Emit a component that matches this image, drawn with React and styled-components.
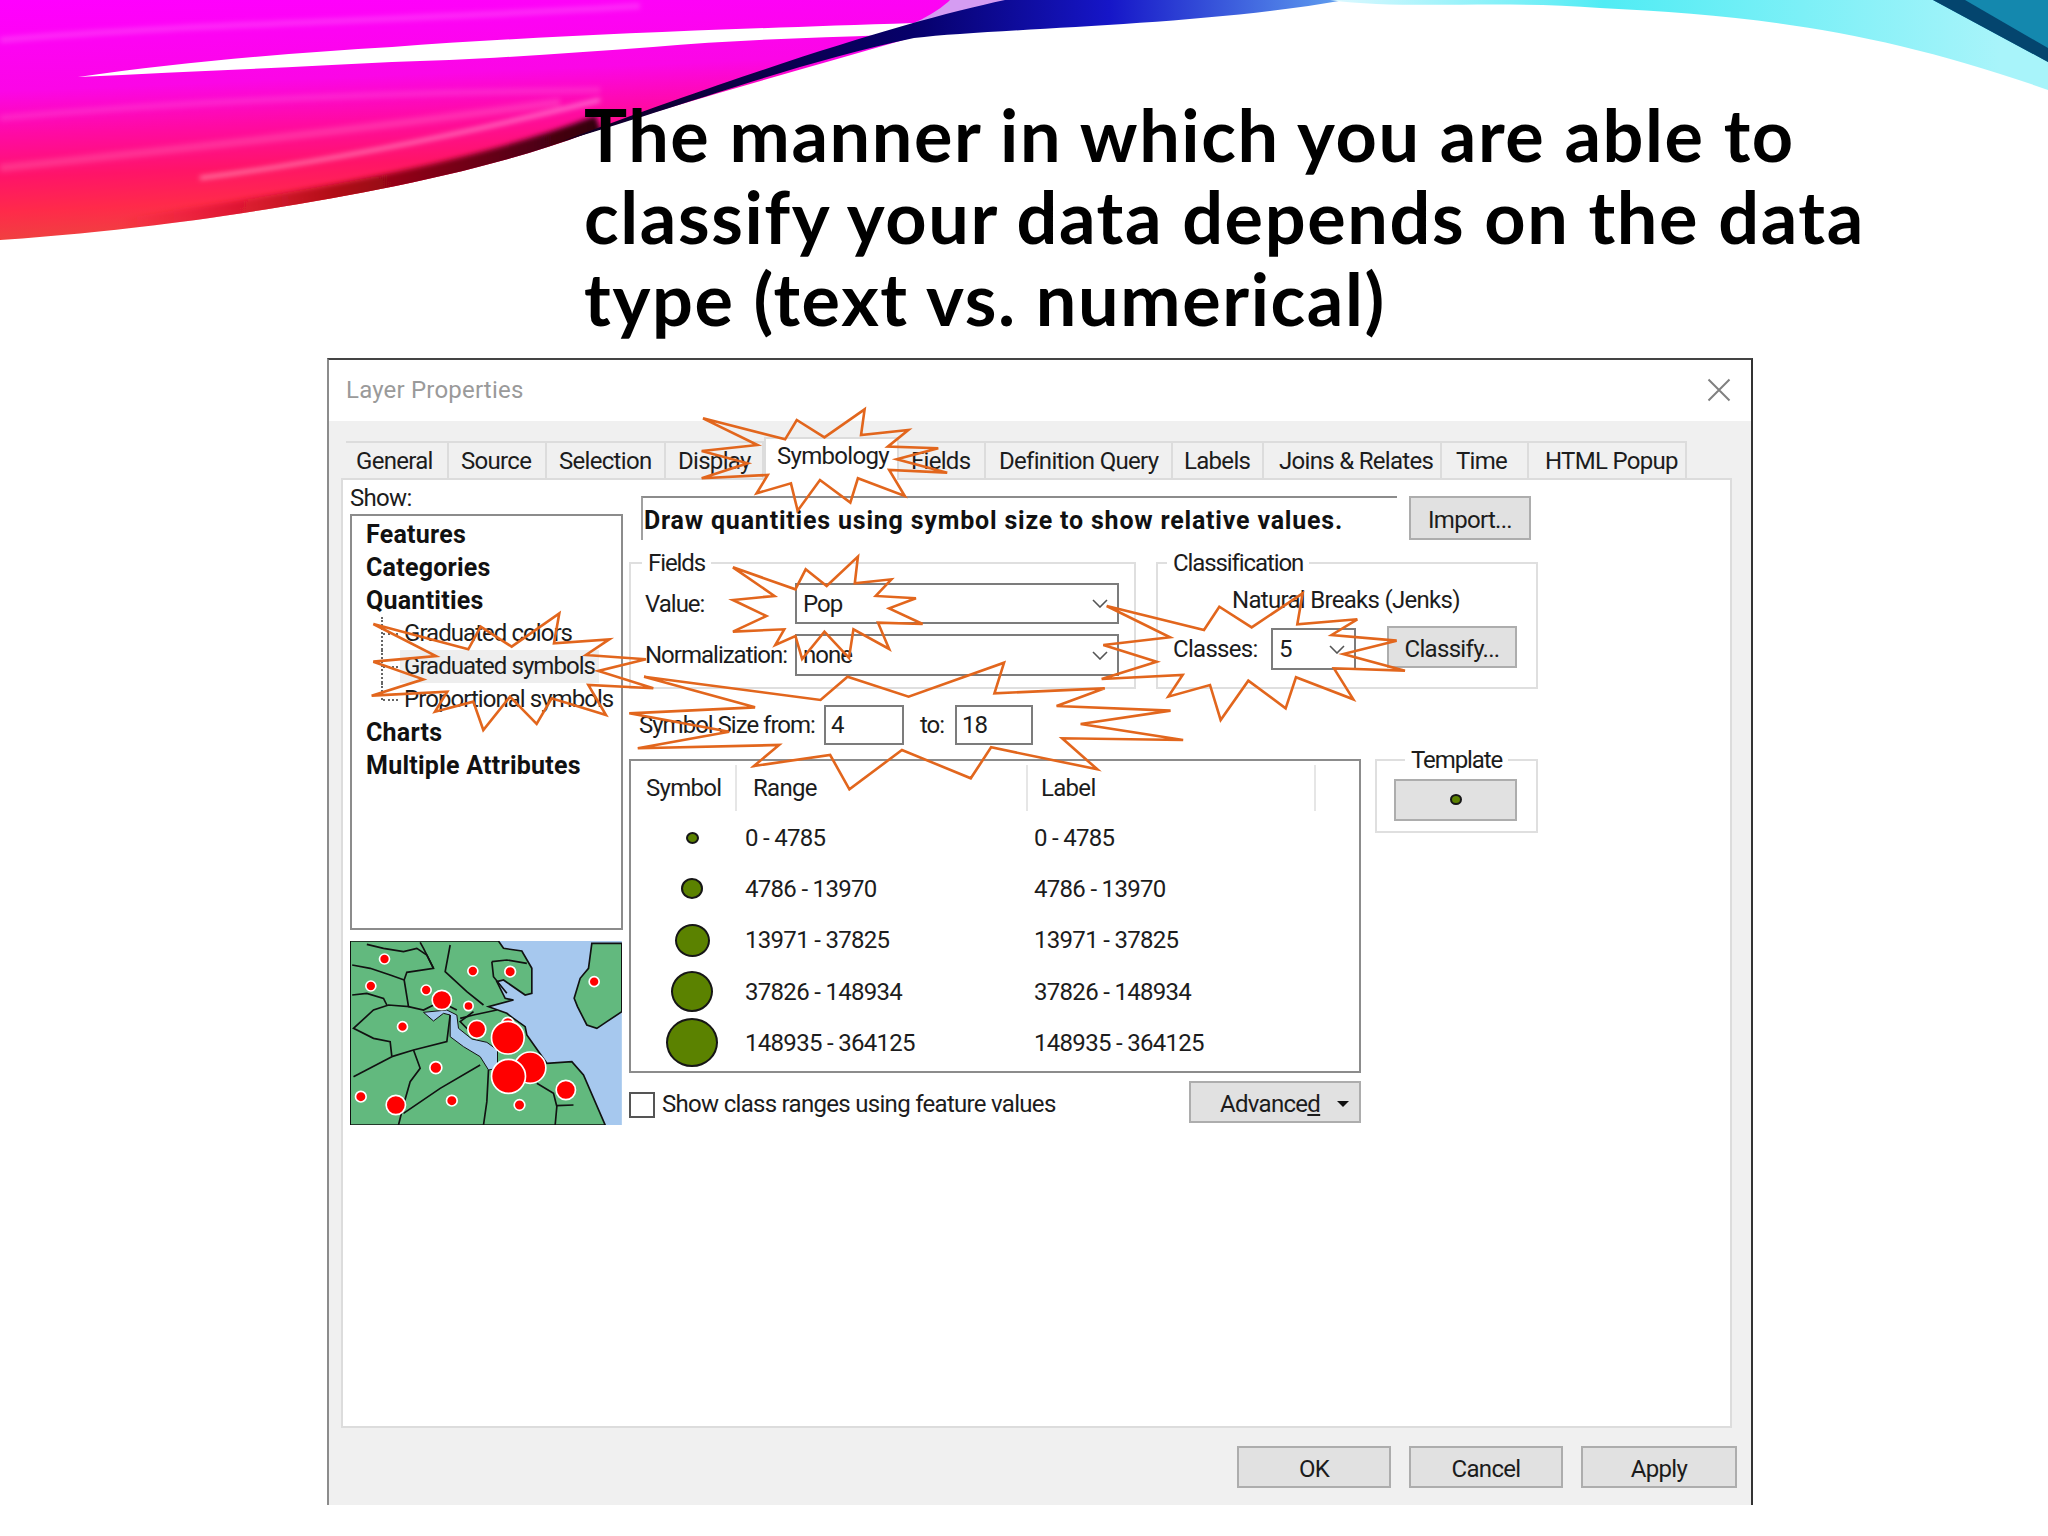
import React from "react";
import styled, { createGlobalStyle } from "styled-components";

const GlobalStyle = createGlobalStyle`
  html, body {
    margin: 0;
    background: #fff;
  }
`;

const Slide = styled.div`
  position: relative;
  width: 2048px;
  height: 1536px;
  overflow: hidden;
  background: #fff;
  font-family: Roboto, "Liberation Sans", sans-serif;
  font-size: 24px;
  letter-spacing: -0.7px;
  color: #1c1c1c;
`;
const Banner = styled.svg`
  position: absolute;
  left: 0;
  top: 0;
`;
const Callouts = styled.svg`
  position: absolute;
  left: 0;
  top: 0;
  z-index: 5;
  pointer-events: none;
`;
const Title = styled.h1`
  position: relative;
  margin: 0;
  padding: 93px 0 0 584px;
  height: 358px;
  box-sizing: border-box;
  font-family: Lato, "Open Sans", sans-serif;
  font-weight: 700;
  font-size: 72px;
  line-height: 82px;
  letter-spacing: 1.6px;
  color: #000;
`;

const Dialog = styled.div`
  position: relative;
  margin-left: 327px;
  width: 1426px;
  height: 1147px;
  box-sizing: border-box;
  background: #f0f0f0;
  border-top: 2px solid #444;
  border-left: 2px solid #8c8c8c;
  border-right: 2px solid #333;
  display: flex;
  flex-direction: column;
`;
const TitleBar = styled.div`
  height: 59px;
  flex: none;
  background: #fff;
  display: flex;
  align-items: center;
  justify-content: space-between;
  padding: 0 20px 2px 17px;
  letter-spacing: 0.2px;
  color: #9a9a9a;
`;
const TabBar = styled.div`
  margin: 20px 0 0 17px;
  height: 37px;
  flex: none;
  display: flex;
  align-items: flex-end;
`;
const Tab = styled.div`
  width: ${(p) => p.$w}px;
  height: ${(p) => (p.$active ? 43 : 37)}px;
  margin-bottom: ${(p) => (p.$active ? -2 : 0)}px;
  position: relative;
  z-index: ${(p) => (p.$active ? 1 : 0)};
  flex: none;
  box-sizing: border-box;
  background: ${(p) => (p.$active ? "#fff" : "#f0f0f0")};
  border: 2px solid #dcdcdc;
  border-left-width: ${(p) => (p.$active ? 2 : 0)}px;
  border-bottom-width: 0;
  display: flex;
  align-items: center;
  padding-left: ${(p) => p.$pad}px;
  padding-bottom: ${(p) => (p.$active ? 8 : 0)}px;
  white-space: nowrap;
`;
const Panel = styled.div`
  margin-left: 12px;
  width: 1391px;
  height: 950px;
  flex: none;
  box-sizing: border-box;
  background: #fff;
  border: 2px solid #dcdcdc;
  padding-left: 7px;
  display: flex;
  gap: 6px;
`;
const LeftColumn = styled.div`
  width: 273px;
  flex: none;
  display: flex;
  flex-direction: column;
`;
const ShowLabel = styled.div`
  height: 34px;
  line-height: 36px;
`;
const ListBox = styled.div`
  height: 416px;
  flex: none;
  box-sizing: border-box;
  border: 2px solid #8c8c8c;
  padding-top: 2px;
`;
const GroupRow = styled.div`
  height: 33px;
  line-height: 33px;
  padding-left: 14px;
  font-weight: 700;
  font-size: 25px;
  letter-spacing: 0.25px;
  color: #111;
`;
const TreeRow = styled.div`
  position: relative;
  height: 33px;
  line-height: 33px;
  padding-left: 48px;
  white-space: nowrap;
  letter-spacing: -0.95px;

  &::before {
    content: "";
    position: absolute;
    left: 29px;
    top: 0;
    height: ${(p) => (p.$last ? "50%" : "100%")};
    border-left: 2px dotted #666;
  }
  &::after {
    content: "";
    position: absolute;
    left: 31px;
    top: 16px;
    width: 15px;
    border-top: 2px dotted #666;
  }
`;
const TreeLabel = styled.span`
  display: inline-block;
  padding: 0 4px;
  background: ${(p) => (p.$selected ? "#eeeeee" : "transparent")};
`;
const MapFrame = styled.svg`
  margin-top: 11px;
  display: block;
  flex: none;
`;
const RightColumn = styled.div`
  width: 909px;
  flex: none;
  padding-top: 16px;
  display: flex;
  flex-direction: column;
`;
const TopRow = styled.div`
  display: flex;
  padding-left: 12px;
  gap: 12px;
`;
const Description = styled.div`
  width: 756px;
  height: 44px;
  box-sizing: border-box;
  border-top: 2px solid #8c8c8c;
  border-left: 2px solid #a0a0a0;
  padding-left: 1px;
  line-height: 46px;
  font-weight: 700;
  font-size: 25px;
  letter-spacing: 0.8px;
  white-space: nowrap;
  color: #111;
`;
const Button = styled.div`
  width: ${(p) => p.$w}px;
  height: ${(p) => p.$h || 43}px;
  flex: none;
  box-sizing: border-box;
  background: #e1e1e1;
  border: 2px solid #adadad;
  padding-top: 3px;
  display: flex;
  align-items: center;
  justify-content: center;
`;
const GroupsRow = styled.div`
  margin-top: 22px;
  display: flex;
  gap: 20px;
`;
const Group = styled.div`
  position: relative;
  width: ${(p) => p.$w}px;
  height: ${(p) => p.$h}px;
  flex: none;
  box-sizing: border-box;
  border: 2px solid #dfdfdf;
`;
const Legend = styled.span`
  position: absolute;
  left: ${(p) => p.$left}px;
  top: -15px;
  padding: 0 6px;
  background: #fff;
  letter-spacing: -1.1px;
`;
const FieldsGrid = styled.div`
  padding: 19px 0 0 14px;
  display: grid;
  grid-template-columns: 150px 324px;
  grid-template-rows: 41px 42px;
  row-gap: 10px;
  align-items: center;
  letter-spacing: -1px;
`;
const Combo = styled.div`
  width: ${(p) => p.$w || 324}px;
  height: ${(p) => p.$h || 41}px;
  flex: none;
  box-sizing: border-box;
  background: #fff;
  border: 2px solid #7c7c7c;
  display: flex;
  align-items: center;
  justify-content: space-between;
  padding: 0 9px 0 6px;
`;
const NaturalBreaks = styled.div`
  padding: 22px 0 0 74px;
  height: 28px;
  line-height: 28px;
`;
const ClassesRow = styled.div`
  margin-top: 14px;
  padding-left: 15px;
  display: flex;
  align-items: center;
`;
const ClassesLabel = styled.span`
  width: 98px;
`;
const ClassifyButton = styled(Button)`
  margin: -4px 0 0 31px;
`;
const SizeRow = styled.div`
  margin-top: 16px;
  padding-left: 10px;
  height: 40px;
  display: flex;
  align-items: center;
  letter-spacing: -1px;
`;
const SizeLabel = styled.span`
  width: ${(p) => p.$w}px;
  padding-left: ${(p) => p.$pad || 0}px;
  box-sizing: border-box;
`;
const NumberBox = styled.div`
  width: ${(p) => p.$w}px;
  height: 40px;
  flex: none;
  box-sizing: border-box;
  border: 2px solid #7c7c7c;
  padding-left: 5px;
  line-height: 36px;
`;
const TableRow = styled.div`
  margin-top: 14px;
  display: flex;
  align-items: flex-start;
  gap: 14px;
`;
const Table = styled.div`
  width: 732px;
  height: 314px;
  flex: none;
  box-sizing: border-box;
  border: 2px solid #8c8c8c;
`;
const Columns = styled.div`
  display: grid;
  grid-template-columns: 106px 291px 288px;
  align-items: center;
  height: ${(p) => p.$h}px;
`;
const HeaderCell = styled.div`
  height: 46px;
  margin-top: 2px;
  box-sizing: border-box;
  line-height: 46px;
  padding-left: ${(p) => p.$pad}px;
  border-right: 2px solid #e6e6e6;
`;
const SymbolCell = styled.div`
  display: flex;
  justify-content: center;
  padding-left: 16px;
`;
const Bubble = styled.div`
  width: ${(p) => p.$w}px;
  height: ${(p) => p.$h}px;
  box-sizing: border-box;
  border-radius: 50%;
  background: #5b8200;
  border: 2px solid #161616;
`;
const TemplateDot = styled(Bubble)`
  margin-top: -5px;
`;
const ValueCell = styled.div`
  padding-left: ${(p) => p.$pad}px;
`;
const TemplateInner = styled.div`
  padding: 18px 0 0 17px;
`;
const FooterRow = styled.div`
  margin-top: 8px;
  width: 732px;
  height: 42px;
  display: flex;
  align-items: center;
`;
const CheckBox = styled.div`
  width: 26px;
  height: 26px;
  margin: 6px 7px 0 0;
  box-sizing: border-box;
  background: #fff;
  border: 2px solid #555;
`;
const CheckLabel = styled.span`
  margin-top: 4px;
  flex: 1;
`;
const AdvancedButton = styled(Button)`
  justify-content: flex-start;
  padding-left: 29px;
  gap: 17px;
`;
const Underlined = styled.span`
  text-decoration: underline;
`;
const Caret = styled.span`
  width: 0;
  height: 0;
  border-left: 6px solid transparent;
  border-right: 6px solid transparent;
  border-top: 6px solid #111;
`;
const DialogButtons = styled.div`
  margin: 18px 0 0 908px;
  display: flex;
  gap: 18px;
`;

const tabs = [
  ["General", 103, false, 10],
  ["Source", 98, false, 12],
  ["Selection", 119, false, 12],
  ["Display", 98, false, 12],
  ["Symbology", 135, true, 11],
  ["Fields", 87, false, 12],
  ["Definition Query", 187, false, 13],
  ["Labels", 91, false, 11],
  ["Joins & Relates", 178, false, 15],
  ["Time", 87, false, 14],
  ["HTML Popup", 158, false, 16],
];

const classes = [
  ["0 - 4785", 13, 12],
  ["4786 - 13970", 22, 21],
  ["13971 - 37825", 35, 33],
  ["37826 - 148934", 42, 41],
  ["148935 - 364125", 52, 49],
];

const orange = "#e2661d";

// outlines traced from the crops, each group has its own scale
const stars = [
  {
    at: "translate(320 350) scale(0.4464 0.3333)",
    points:
      "858,205 1042,268 1068,210 1130,262 1220,178 1212,255 1318,240 1272,290 1385,295 1292,328 1405,368 1275,360 1310,438 1205,385 1188,458 1120,390 1070,482 1055,400 978,430 1003,375 855,385 958,340 855,303 980,285",
  },
  {
    at: "translate(320 350) scale(0.4464 0.3333)",
    points:
      "925,652 1065,718 1088,658 1135,708 1205,620 1198,700 1280,688 1245,738 1335,745 1275,775 1350,822 1250,818 1275,897 1195,838 1185,924 1130,845 1080,927 1065,858 1020,885 1040,838 925,845 1000,798 925,750 1018,738",
  },
  {
    at: "translate(360 600) scale(0.3333)",
    points:
      "40,72 325,148 362,80 455,140 598,40 582,130 748,118 678,165 858,178 715,213 880,265 685,255 738,345 575,295 530,372 450,290 370,390 340,305 225,335 262,275 35,287 190,238 40,185 228,168",
  },
  {
    at: "translate(620 650) scale(0.37 0.3333)",
    points:
      "65,80 542,150 615,80 780,140 1038,38 1012,130 1310,115 1180,168 1488,182 1245,222 1522,270 1195,265 1290,358 1003,292 948,385 762,300 620,418 568,315 362,348 430,285 48,295 295,245 25,190 365,172",
  },
  {
    at: "translate(1090 580) scale(0.3333)",
    points:
      "50,78 342,150 388,80 485,142 638,40 622,133 802,118 725,165 920,182 760,222 945,272 732,265 790,358 618,292 587,385 475,302 392,420 360,315 235,350 278,285 35,297 200,245 40,195 240,172",
  },
];

const mapDots = [
  [133, 72, 15], [398, 108, 15], [510, 110, 16], [92, 153, 15], [258, 165, 15],
  [305, 195, 29], [385, 213, 14], [762, 140, 15], [187, 275, 15], [410, 283, 27],
  [503, 265, 18], [287, 398, 18], [677, 465, 29], [62, 485, 16], [167, 510, 29],
  [335, 497, 16], [538, 510, 16], [570, 398, 47], [503, 308, 49], [505, 424, 51],
];

const mapLines = [
  "36,90 90,100 150,120 192,135 200,112 280,100 270,80 250,40 240,22",
  "80,28 130,40 190,50 230,40 260,60 280,100",
  "330,30 315,110 380,170 430,210",
  "455,80 460,125 500,175",
  "455,80 500,75 560,85",
  "192,135 205,215 145,210 100,225 40,280 100,310 150,320 155,365",
  "36,180 80,175 130,190 140,210",
  "205,215 250,225 300,200 350,225",
  "155,365 40,425",
  "155,365 220,345 320,320 330,240",
  "220,345 240,400 210,440 190,510 175,570",
  "190,535 300,460 420,390",
  "445,405 440,500 430,570",
  "590,445 640,475 650,515 645,570",
  "650,512 700,510",
  "360,250 400,240 470,225",
  "385,285 360,260 400,230",
];

function Chevron() {
  return (
    <svg width="16" height="9" viewBox="0 0 16 9" fill="none">
      <polyline points="1,1 8,8 15,1" stroke="#555" strokeWidth="1.6" />
    </svg>
  );
}

function CloseIcon() {
  return (
    <svg width="24" height="24" viewBox="0 0 24 24" fill="none">
      <path d="M1.5 1.5 L22.5 22.5 M22.5 1.5 L1.5 22.5" stroke="#808080" strokeWidth="2" />
    </svg>
  );
}

function PreviewMap() {
  return (
    <MapFrame width="272" height="184" viewBox="30 18 815 552">
      <rect x="30" y="18" width="815" height="552" fill="#a6c8ee" />
      <polygon
        fill="#62b97e"
        stroke="#111"
        strokeWidth="5"
        points="30,18 475,18 490,40 545,48 575,100 575,175 555,180 490,135 470,140 495,190 520,195 445,215 500,235 520,250 555,275 560,300 620,385 695,380 730,420 795,570 30,570"
      />
      <polygon
        fill="#a6c8ee"
        stroke="#111"
        strokeWidth="3"
        points="250,232 280,258 310,235 330,240 330,305 370,335 420,365 445,405 472,400 472,345 440,322 395,312 355,280 350,240 320,225"
      />
      <polygon
        fill="#62b97e"
        stroke="#111"
        strokeWidth="5"
        points="755,25 845,25 845,230 800,260 770,280 740,270 712,215 702,190 720,130 745,100"
      />
      {mapLines.map((line) => (
        <polyline key={line} points={line} fill="none" stroke="#111" strokeWidth="5" />
      ))}
      {mapDots.map(([x, y, r]) => (
        <circle key={`${x}-${y}`} cx={x} cy={y} r={r} fill="#ff0000" stroke="#fff" strokeWidth="5" />
      ))}
    </MapFrame>
  );
}

function App() {
  return (
    <Slide>
      <GlobalStyle />
      <Banner width="2048" height="300" viewBox="0 0 2048 300">
        <defs>
          <linearGradient id="swoosh" gradientUnits="userSpaceOnUse" x1="0" y1="0" x2="10" y2="240">
            <stop offset="0" stopColor="#ff00ff" />
            <stop offset="0.38" stopColor="#fb06e6" />
            <stop offset="0.56" stopColor="#ff0aa4" />
            <stop offset="0.74" stopColor="#ff1468" />
            <stop offset="0.88" stopColor="#ff2a4a" />
            <stop offset="1" stopColor="#f04040" />
          </linearGradient>
          <linearGradient id="deep" gradientUnits="userSpaceOnUse" x1="560" y1="0" x2="1345" y2="0">
            <stop offset="0" stopColor="#100020" />
            <stop offset="0.45" stopColor="#06006a" />
            <stop offset="0.7" stopColor="#1616c8" />
            <stop offset="1" stopColor="#60a0f0" />
          </linearGradient>
          <linearGradient id="rim" gradientUnits="userSpaceOnUse" x1="120" y1="0" x2="600" y2="0">
            <stop offset="0" stopColor="#e01030" stopOpacity="0" />
            <stop offset="0.45" stopColor="#b00818" />
            <stop offset="1" stopColor="#300010" />
          </linearGradient>
          <linearGradient id="aqua" gradientUnits="userSpaceOnUse" x1="1340" y1="0" x2="2000" y2="0">
            <stop offset="0" stopColor="#d8f8ff" />
            <stop offset="0.4" stopColor="#50ecf4" />
            <stop offset="1" stopColor="#a8f4fa" />
          </linearGradient>
          <clipPath id="swooshClip">
            <path d="M0 0 H1010 L914 37 C800 70 690 100 588 133 C470 178 300 205 196 220 C120 230 60 236 0 240 Z" />
          </clipPath>
          <filter id="soft" x="-5%" y="-20%" width="110%" height="140%">
            <feGaussianBlur stdDeviation="2.5" />
          </filter>
        </defs>
        <path d="M0 0 H1010 L914 37 C800 70 690 100 588 133 C470 178 300 205 196 220 C120 230 60 236 0 240 Z" fill="url(#swoosh)" />
        <path d="M950 0 H1010 L914 30 L880 38 C920 22 940 10 950 0 Z" fill="#d59cf2" />
        <g clipPath="url(#swooshClip)">
          <path d="M120 232 C300 205 470 178 600 128" stroke="url(#rim)" strokeWidth="26" fill="none" filter="url(#soft)" />
          <g filter="url(#soft)" fill="none" stroke="#fff">
            <path d="M0 40 C180 24 420 20 640 6" strokeOpacity="0.16" strokeWidth="6" />
            <path d="M0 118 C200 100 400 92 600 90" strokeOpacity="0.12" strokeWidth="6" />
            <path d="M0 168 C150 152 360 130 560 102" strokeOpacity="0.14" strokeWidth="8" />
            <path d="M200 178 C340 160 480 130 600 100" strokeOpacity="0.4" strokeWidth="4" />
          </g>
        </g>
        <path d="M78 77 C180 62 290 53 392 47 C540 36 700 30 914 23 L888 35 C810 38 730 40 653 47 C560 54 470 60 392 62 C280 68 180 72 78 77 Z" fill="#fff" />
        <path d="M560 142 C700 100 800 62 914 38 C1000 28 1200 26 1345 0 H1005 C920 18 780 60 560 142 Z" fill="url(#deep)" />
        <path d="M1330 0 C1400 10 1500 0 1600 8 C1750 15 1880 30 2048 90 V0 Z" fill="url(#aqua)" />
        <path d="M1933 0 L2048 62 V0 Z" fill="#1488ae" />
        <path d="M1933 0 L2048 62 V48 L1965 0 Z" fill="#04456e" />
      </Banner>

      <Title>
        The manner in which you are able to
        <br />
        classify your data depends on the data
        <br />
        type (text vs. numerical)
      </Title>

      <Dialog>
        <TitleBar>
          Layer Properties
          <CloseIcon />
        </TitleBar>
        <TabBar>
          {tabs.map(([name, w, active, pad]) => (
            <Tab key={name} $w={w} $active={active} $pad={pad}>
              {name}
            </Tab>
          ))}
        </TabBar>
        <Panel>
          <LeftColumn>
            <ShowLabel>Show:</ShowLabel>
            <ListBox>
              <GroupRow>Features</GroupRow>
              <GroupRow>Categories</GroupRow>
              <GroupRow>Quantities</GroupRow>
              <TreeRow>
                <TreeLabel>Graduated colors</TreeLabel>
              </TreeRow>
              <TreeRow>
                <TreeLabel $selected>Graduated symbols</TreeLabel>
              </TreeRow>
              <TreeRow $last>
                <TreeLabel>Proportional symbols</TreeLabel>
              </TreeRow>
              <GroupRow>Charts</GroupRow>
              <GroupRow>Multiple Attributes</GroupRow>
            </ListBox>
            <PreviewMap />
          </LeftColumn>

          <RightColumn>
            <TopRow>
              <Description>Draw quantities using symbol size to show relative values.</Description>
              <Button $w={122} $h={44}>Import...</Button>
            </TopRow>

            <GroupsRow>
              <Group $w={507} $h={127}>
                <Legend $left={11}>Fields</Legend>
                <FieldsGrid>
                  <span>Value:</span>
                  <Combo>
                    Pop
                    <Chevron />
                  </Combo>
                  <span>Normalization:</span>
                  <Combo $h={42}>
                    none
                    <Chevron />
                  </Combo>
                </FieldsGrid>
              </Group>
              <Group $w={382} $h={127}>
                <Legend $left={9}>Classification</Legend>
                <NaturalBreaks>Natural Breaks (Jenks)</NaturalBreaks>
                <ClassesRow>
                  <ClassesLabel>Classes:</ClassesLabel>
                  <Combo $w={85} $h={42}>
                    5
                    <Chevron />
                  </Combo>
                  <ClassifyButton $w={130} $h={42}>Classify...</ClassifyButton>
                </ClassesRow>
              </Group>
            </GroupsRow>

            <SizeRow>
              <SizeLabel $w={185}>Symbol Size from:</SizeLabel>
              <NumberBox $w={80}>4</NumberBox>
              <SizeLabel $w={51} $pad={16}>to:</SizeLabel>
              <NumberBox $w={78}>18</NumberBox>
            </SizeRow>

            <TableRow>
              <div>
                <Table>
                  <Columns $h={51}>
                    <HeaderCell $pad={15}>Symbol</HeaderCell>
                    <HeaderCell $pad={16}>Range</HeaderCell>
                    <HeaderCell $pad={13}>Label</HeaderCell>
                  </Columns>
                  {classes.map(([range, w, h]) => (
                    <Columns key={range} $h={51.3}>
                      <SymbolCell>
                        <Bubble $w={w} $h={h} />
                      </SymbolCell>
                      <ValueCell $pad={8}>{range}</ValueCell>
                      <ValueCell $pad={6}>{range}</ValueCell>
                    </Columns>
                  ))}
                </Table>
                <FooterRow>
                  <CheckBox />
                  <CheckLabel>Show class ranges using feature values</CheckLabel>
                  <AdvancedButton $w={172} $h={42}>
                    <span>
                      Advance<Underlined>d</Underlined>
                    </span>
                    <Caret />
                  </AdvancedButton>
                </FooterRow>
              </div>
              <Group $w={163} $h={74}>
                <Legend $left={28}>Template</Legend>
                <TemplateInner>
                  <Button $w={123} $h={42}>
                    <TemplateDot $w={12} $h={11} />
                  </Button>
                </TemplateInner>
              </Group>
            </TableRow>
          </RightColumn>
        </Panel>
        <DialogButtons>
          <Button $w={154} $h={42}>OK</Button>
          <Button $w={154} $h={42}>Cancel</Button>
          <Button $w={156} $h={42}>Apply</Button>
        </DialogButtons>
      </Dialog>

      <Callouts width="2048" height="1536" viewBox="0 0 2048 1536">
        {stars.map((star) => (
          <polygon
            key={star.points}
            transform={star.at}
            points={star.points}
            fill="none"
            stroke={orange}
            strokeWidth="2.6"
            vectorEffect="non-scaling-stroke"
          />
        ))}
      </Callouts>
    </Slide>
  );
}

export default App;
